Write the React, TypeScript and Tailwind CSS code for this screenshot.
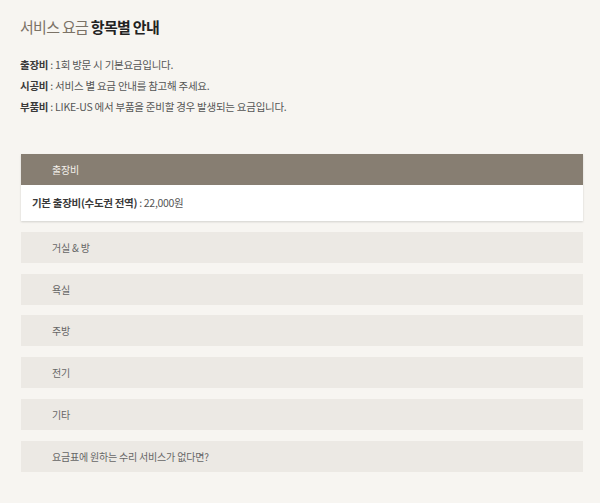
import React from 'react';

const font = { fontFamily: '"Noto Sans CJK KR", "Noto Sans", sans-serif' };

const notes = [
  { label: '출장비', text: '1회 방문 시 기본요금입니다.' },
  { label: '시공비', text: '서비스 별 요금 안내를 참고해 주세요.' },
  { label: '부품비', text: 'LIKE-US 에서 부품을 준비할 경우 발생되는 요금입니다.' },
];

const items = ['거실 & 방', '욕실', '주방', '전기', '기타', '요금표에 원하는 수리 서비스가 없다면?'];

export default function App() {
  return (
    <div className="min-h-[503px] w-[600px] bg-[#f7f5f1] pl-[21px] pr-[17px] pt-[15px] pb-8 text-[#555]" style={font}>
      {/* 제목 */}
      <h2 className="-ml-px text-[15px] leading-[24px] tracking-[-0.7px] text-[#7b7266]">
        서비스 요금 <span className="font-bold text-[#222]">항목별 안내</span>
      </h2>

      {/* 요금 구성 설명 */}
      <div className="-ml-px mt-[15px] flex flex-col text-[10.5px] leading-[21px] tracking-[-0.25px]">
        {notes.map((n) => (
          <p key={n.label}>
            <span className="font-semibold text-[#3a3a3a]">{n.label}</span> : {n.text}
          </p>
        ))}
      </div>

      {/* 아코디언 */}
      <div className="mt-[37px] flex flex-col gap-[10.8px]">
        <div className="shadow-[0_1px_2px_rgba(0,0,0,0.15)]">
          <div className="flex h-[31px] items-center bg-[#877e72] pl-[31px] text-[10px] tracking-[-0.2px] text-[#f3f0ea]">출장비</div>
          <div className="flex h-[36px] items-center bg-white pl-[11px] text-[10.5px] tracking-[-0.3px]">
            <span className="font-semibold text-[#3a3a3a]">기본 출장비(수도권 전역)</span>&nbsp;: 22,000원
          </div>
        </div>
        {items.map((it) => (
          <div key={it} className="flex h-[31px] items-center bg-[#ece9e4] pl-[31px] text-[10px] tracking-[-0.2px] text-[#666]">
            {it}
          </div>
        ))}
      </div>
    </div>
  );
}
